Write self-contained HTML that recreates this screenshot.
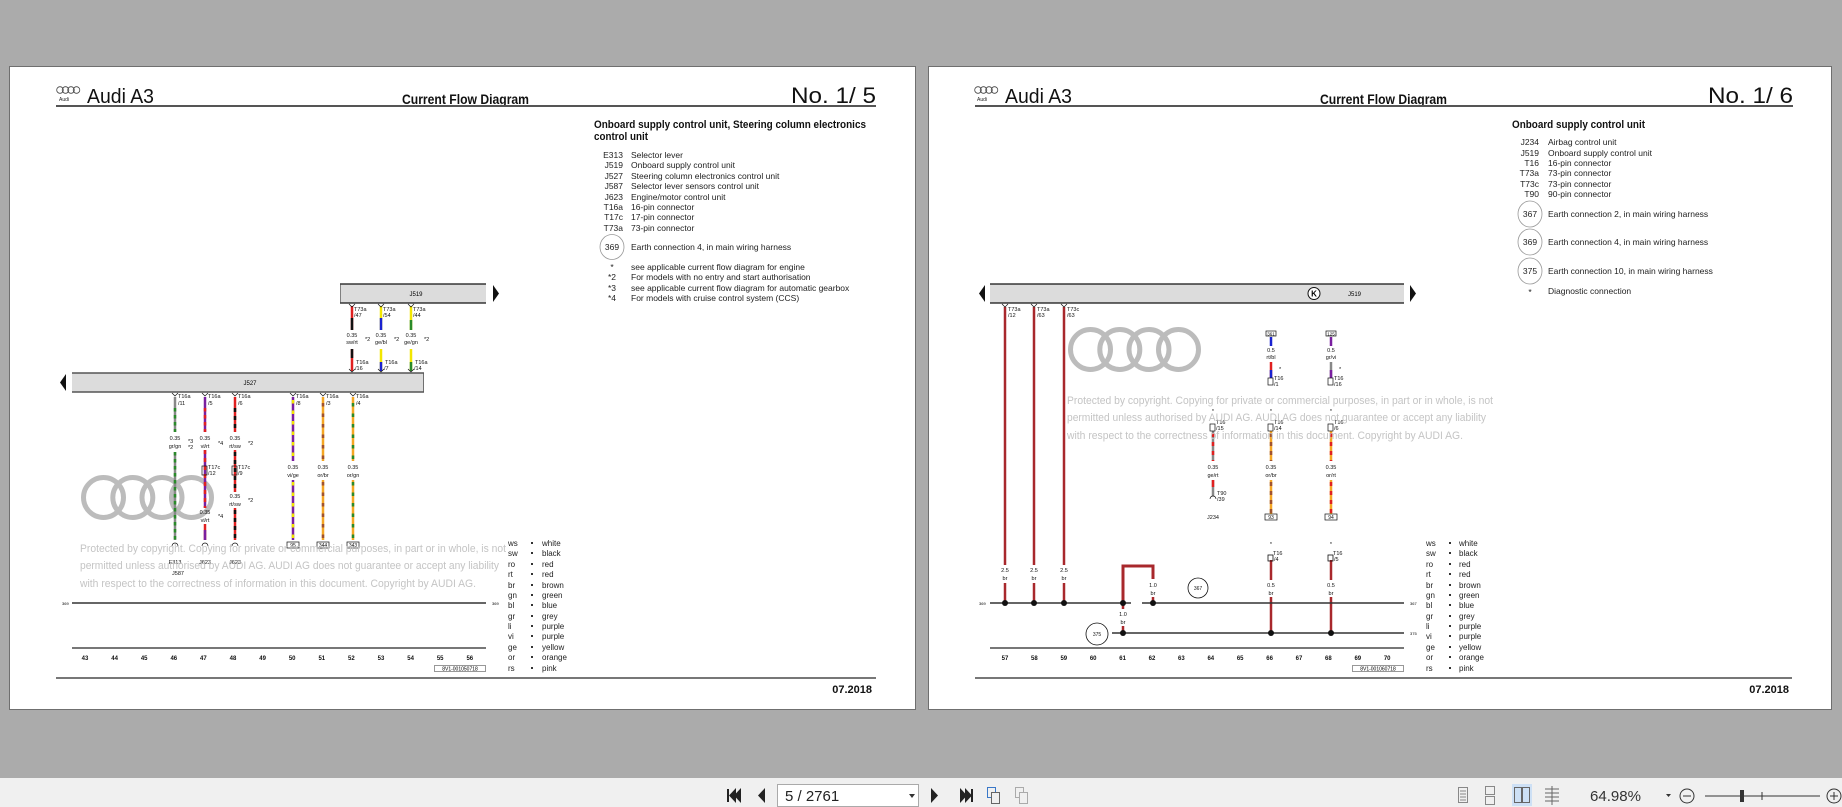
<!DOCTYPE html>
<html><head><meta charset="utf-8"><style>
html,body{margin:0;padding:0;width:1842px;height:807px;overflow:hidden;background:#ababab}
svg{display:block}
.n{font-family:"Liberation Sans Narrow","Liberation Sans",sans-serif}
.s{font-family:"Liberation Sans",sans-serif}
</style></head><body>
<svg width="1842" height="807" viewBox="0 0 1842 807" xmlns="http://www.w3.org/2000/svg">
<rect width="1842" height="807" fill="#ababab"/>
<rect x="9.5" y="66.5" width="906" height="643" fill="#fff" stroke="#6f6f6f"/>
<rect x="928.5" y="66.5" width="903" height="643" fill="#fff" stroke="#6f6f6f"/>

<g id="L">
<g fill="none" stroke="#444" stroke-width="0.8"><circle cx="60" cy="90" r="3.3"/><circle cx="65.5" cy="90" r="3.3"/><circle cx="71" cy="90" r="3.3"/><circle cx="76.5" cy="90" r="3.3"/></g>
<text x="59" y="101" font-size="5" class="s" fill="#222">Audi</text>
<text x="87" y="103" font-size="20" class="n" textLength="67" lengthAdjust="spacingAndGlyphs" fill="#111">Audi A3</text>
<text x="402" y="104" font-size="14" font-weight="bold" class="n" textLength="127" lengthAdjust="spacingAndGlyphs" fill="#111">Current Flow Diagram</text>
<text x="791" y="103" font-size="22" class="n" textLength="85" lengthAdjust="spacingAndGlyphs" fill="#111">No.  1/  5</text>
<line x1="56" y1="106" x2="876" y2="106" stroke="#555" stroke-width="2"/>
<text x="594" y="128" font-size="11" font-weight="bold" class="n" textLength="272" lengthAdjust="spacingAndGlyphs" fill="#111">Onboard supply control unit, Steering column electronics</text>
<text x="594" y="140" font-size="11" font-weight="bold" class="n" textLength="54" lengthAdjust="spacingAndGlyphs" fill="#111">control unit</text>
<g font-size="8.5" class="n" fill="#222">
<g text-anchor="end">
<text x="623" y="158">E313</text><text x="623" y="168">J519</text><text x="623" y="179">J527</text><text x="623" y="189">J587</text><text x="623" y="200">J623</text><text x="623" y="210">T16a</text><text x="623" y="220">T17c</text><text x="623" y="231">T73a</text>
</g>
<text x="631" y="158">Selector lever</text><text x="631" y="168">Onboard supply control unit</text><text x="631" y="179">Steering column electronics control unit</text><text x="631" y="189">Selector lever sensors control unit</text><text x="631" y="200">Engine/motor control unit</text><text x="631" y="210">16-pin connector</text><text x="631" y="220">17-pin connector</text><text x="631" y="231">73-pin connector</text>
<text x="612" y="250" text-anchor="middle">369</text><text x="631" y="250">Earth connection 4, in main wiring harness</text>
<text x="612" y="270" text-anchor="middle">*</text><text x="631" y="270">see applicable current flow diagram for engine</text>
<text x="612" y="280" text-anchor="middle">*2</text><text x="631" y="280">For models with no entry and start authorisation</text>
<text x="612" y="291" text-anchor="middle">*3</text><text x="631" y="291">see applicable current flow diagram for automatic gearbox</text>
<text x="612" y="301" text-anchor="middle">*4</text><text x="631" y="301">For models with cruise control system (CCS)</text>
</g>
<ellipse cx="612" cy="247" rx="12" ry="12.5" fill="none" stroke="#999" stroke-width="0.8"/>

<g fill="none" stroke="#bcbcbc" stroke-width="5"><circle cx="103.5" cy="497.5" r="20"/><circle cx="132.8" cy="497.5" r="20"/><circle cx="162" cy="497.5" r="20"/><circle cx="191.5" cy="497.5" r="20"/></g>

<rect x="340" y="284" width="146" height="19" fill="#dcdcdc"/>
<line x1="340" y1="284" x2="486" y2="284" stroke="#111" stroke-width="1.2"/><line x1="340" y1="303" x2="486" y2="303" stroke="#111" stroke-width="1.2"/><line x1="340.5" y1="284" x2="340.5" y2="303" stroke="#444" stroke-width="0.6"/>
<text x="416" y="296" font-size="6" class="n" text-anchor="middle">J519</text>
<polygon points="493,285 499,293.5 493,302" fill="#111"/>
<rect x="72" y="373" width="352" height="19" fill="#dcdcdc"/>
<line x1="72" y1="373" x2="424" y2="373" stroke="#555" stroke-width="1.5"/><line x1="72" y1="392" x2="424" y2="392" stroke="#555" stroke-width="1.5"/><line x1="423.5" y1="373" x2="423.5" y2="392" stroke="#555" stroke-width="0.8"/>
<text x="250" y="385" font-size="6" class="n" text-anchor="middle">J527</text>
<polygon points="66,374 60,382.5 66,391" fill="#111"/>

<g stroke-width="2.5">
<line x1="352" y1="306" x2="352" y2="330" stroke="#e02020"/><line x1="352" y1="318" x2="352" y2="330" stroke="#111"/>
<line x1="352" y1="349" x2="352" y2="371" stroke="#e02020"/><line x1="352" y1="349" x2="352" y2="358" stroke="#111"/>
<line x1="381" y1="306" x2="381" y2="330" stroke="#f2e600"/><line x1="381" y1="318" x2="381" y2="330" stroke="#1a22d0"/>
<line x1="381" y1="349" x2="381" y2="371" stroke="#f2e600"/><line x1="381" y1="362" x2="381" y2="371" stroke="#1a22d0"/>
<line x1="411" y1="306" x2="411" y2="330" stroke="#f2e600"/><line x1="411" y1="320" x2="411" y2="330" stroke="#2a8a2a"/>
<line x1="411" y1="349" x2="411" y2="371" stroke="#f2e600"/><line x1="411" y1="362" x2="411" y2="371" stroke="#2a8a2a"/>
</g>
<g font-size="5.5" class="n" fill="#111">
<text x="354" y="311">T73a</text><text x="354" y="317">/47</text><text x="383" y="311">T73a</text><text x="383" y="317">/54</text><text x="413" y="311">T73a</text><text x="413" y="317">/44</text>
<text x="352" y="337" text-anchor="middle">0.35</text><text x="352" y="344" text-anchor="middle">sw/rt</text><text x="365" y="341">*2</text>
<text x="381" y="337" text-anchor="middle">0.35</text><text x="381" y="344" text-anchor="middle">ge/bl</text><text x="394" y="341">*2</text>
<text x="411" y="337" text-anchor="middle">0.35</text><text x="411" y="344" text-anchor="middle">ge/gn</text><text x="424" y="341">*2</text>
<text x="356" y="364">T16a</text><text x="355" y="370">/16</text><text x="385" y="364">T16a</text><text x="384" y="370">/7</text><text x="415" y="364">T16a</text><text x="414" y="370">/14</text>
</g>
<g stroke="#111" fill="none" stroke-width="0.7"><path d="M349 304 l3 3 l3 -3"/><path d="M378 304 l3 3 l3 -3"/><path d="M408 304 l3 3 l3 -3"/><path d="M349 369 l3 3 l3 -3"/><path d="M378 369 l3 3 l3 -3"/><path d="M408 369 l3 3 l3 -3"/></g>

<g stroke-width="2.5">
<line x1="175" y1="397" x2="175" y2="432" stroke="#888"/><line x1="175" y1="408" x2="175" y2="432" stroke="#2a8a2a" stroke-dasharray="3.5 3.5"/>
<line x1="175" y1="452" x2="175" y2="540" stroke="#888"/><line x1="175" y1="452" x2="175" y2="540" stroke="#2a8a2a" stroke-dasharray="3.5 3.5"/>
<line x1="205" y1="397" x2="205" y2="432" stroke="#7a1fa0"/><line x1="205" y1="408" x2="205" y2="432" stroke="#e02020" stroke-dasharray="3.5 3.5"/>
<line x1="205" y1="450" x2="205" y2="508" stroke="#7a1fa0"/><line x1="205" y1="450" x2="205" y2="508" stroke="#e02020" stroke-dasharray="4 4"/>
<line x1="205" y1="524" x2="205" y2="540" stroke="#e02020"/><line x1="205" y1="530" x2="205" y2="540" stroke="#7a1fa0"/>
<line x1="235" y1="397" x2="235" y2="432" stroke="#e02020"/><line x1="235" y1="408" x2="235" y2="432" stroke="#111" stroke-dasharray="4 4"/>
<line x1="235" y1="450" x2="235" y2="492" stroke="#e02020"/><line x1="235" y1="452" x2="235" y2="492" stroke="#111" stroke-dasharray="4 4"/>
<line x1="235" y1="508" x2="235" y2="540" stroke="#e02020"/><line x1="235" y1="510" x2="235" y2="540" stroke="#111" stroke-dasharray="4 4"/>
<line x1="293" y1="397" x2="293" y2="461" stroke="#7a1fa0"/><line x1="293" y1="400" x2="293" y2="461" stroke="#f2e600" stroke-dasharray="3.5 7"/>
<line x1="293" y1="480" x2="293" y2="540" stroke="#7a1fa0"/><line x1="293" y1="482" x2="293" y2="540" stroke="#f2e600" stroke-dasharray="3.5 7"/>
<line x1="323" y1="397" x2="323" y2="461" stroke="#f5a623"/><line x1="323" y1="403" x2="323" y2="461" stroke="#a0522d" stroke-dasharray="3.5 7"/>
<line x1="323" y1="480" x2="323" y2="540" stroke="#f5a623"/><line x1="323" y1="482" x2="323" y2="540" stroke="#a0522d" stroke-dasharray="3.5 7"/>
<line x1="353" y1="397" x2="353" y2="461" stroke="#f5a623"/><line x1="353" y1="403" x2="353" y2="461" stroke="#2a8a2a" stroke-dasharray="3.5 7"/>
<line x1="353" y1="480" x2="353" y2="540" stroke="#f5a623"/><line x1="353" y1="482" x2="353" y2="540" stroke="#2a8a2a" stroke-dasharray="3.5 7"/>
</g>
<g stroke="#111" fill="none" stroke-width="0.7">
<path d="M172 393 l3 3 l3 -3"/><path d="M202 393 l3 3 l3 -3"/><path d="M232 393 l3 3 l3 -3"/><path d="M290 393 l3 3 l3 -3"/><path d="M320 393 l3 3 l3 -3"/><path d="M350 393 l3 3 l3 -3"/>
<path d="M172 546 a3 3 0 0 1 6 0"/><path d="M202 546 a3 3 0 0 1 6 0"/><path d="M232 546 a3 3 0 0 1 6 0"/>
<rect x="202" y="466" width="5" height="9"/><rect x="232" y="466" width="5" height="9"/>
<rect x="287" y="542" width="12" height="6"/><rect x="317" y="542" width="12" height="6"/><rect x="347" y="542" width="12" height="6"/>
</g>
<g font-size="5.5" class="n" fill="#111">
<text x="178" y="398">T16a</text><text x="178" y="405">/11</text><text x="208" y="398">T16a</text><text x="208" y="405">/5</text><text x="238" y="398">T16a</text><text x="238" y="405">/6</text>
<text x="296" y="398">T16a</text><text x="296" y="405">/8</text><text x="326" y="398">T16a</text><text x="326" y="405">/3</text><text x="356" y="398">T16a</text><text x="356" y="405">/4</text>
<text x="175" y="440" text-anchor="middle">0.35</text><text x="175" y="448" text-anchor="middle">gr/gn</text><text x="188" y="443">*3</text><text x="188" y="449">*2</text>
<text x="205" y="440" text-anchor="middle">0.35</text><text x="205" y="448" text-anchor="middle">vi/rt</text><text x="218" y="445">*4</text>
<text x="235" y="440" text-anchor="middle">0.35</text><text x="235" y="448" text-anchor="middle">rt/sw</text><text x="248" y="445">*2</text>
<text x="208" y="469">T17c</text><text x="208" y="475">/12</text><text x="238" y="469">T17c</text><text x="238" y="475">/9</text>
<text x="235" y="498" text-anchor="middle">0.35</text><text x="235" y="506" text-anchor="middle">rt/sw</text><text x="248" y="502">*2</text>
<text x="205" y="514" text-anchor="middle">0.35</text><text x="205" y="522" text-anchor="middle">vi/rt</text><text x="218" y="518">*4</text>
<text x="293" y="469" text-anchor="middle">0.35</text><text x="293" y="477" text-anchor="middle">vi/ge</text>
<text x="323" y="469" text-anchor="middle">0.35</text><text x="323" y="477" text-anchor="middle">or/br</text>
<text x="353" y="469" text-anchor="middle">0.35</text><text x="353" y="477" text-anchor="middle">or/gn</text>
<text x="293" y="547" text-anchor="middle" font-size="5">95</text><text x="323" y="547" text-anchor="middle" font-size="5">344</text><text x="353" y="547" text-anchor="middle" font-size="5">343</text>
<text x="175" y="564" text-anchor="middle">E313</text><text x="205" y="564" text-anchor="middle">J623</text><text x="235" y="564" text-anchor="middle">J623</text><text x="178" y="575" text-anchor="middle">J587</text>
</g>
<g font-size="11" class="n" fill="#c4c4c4">
<text x="80" y="552" textLength="426" lengthAdjust="spacingAndGlyphs">Protected by copyright. Copying for private or commercial purposes, in part or in whole, is not</text>
<text x="80" y="569" textLength="419" lengthAdjust="spacingAndGlyphs">permitted unless authorised by AUDI AG. AUDI AG does not guarantee or accept any liability</text>
<text x="80" y="587" textLength="396" lengthAdjust="spacingAndGlyphs">with respect to the correctness of information in this document. Copyright by AUDI AG.</text>
</g>
<line x1="72" y1="603" x2="486" y2="603" stroke="#333" stroke-width="1.5"/>
<text x="62" y="605" font-size="4" class="n">369</text><text x="492" y="605" font-size="4" class="n">369</text>
<line x1="72" y1="648" x2="486" y2="648" stroke="#777" stroke-width="2"/>
<g font-size="6" font-weight="bold" class="n" text-anchor="middle" fill="#111">
<text x="85" y="660">43</text><text x="114.6" y="660">44</text><text x="144.2" y="660">45</text><text x="173.8" y="660">46</text><text x="203.4" y="660">47</text><text x="233" y="660">48</text><text x="262.6" y="660">49</text><text x="292.2" y="660">50</text><text x="321.8" y="660">51</text><text x="351.4" y="660">52</text><text x="381" y="660">53</text><text x="410.6" y="660">54</text><text x="440.2" y="660">55</text><text x="469.8" y="660">56</text>
</g>
<rect x="434.5" y="665.5" width="51" height="6" fill="none" stroke="#333" stroke-width="0.5"/>
<text x="460" y="670.5" font-size="5" class="n" text-anchor="middle">8V1-001050718</text>
<g font-size="8" class="n" fill="#222">
<text x="508" y="546">ws</text><text x="508" y="556">sw</text><text x="508" y="567">ro</text><text x="508" y="577">rt</text><text x="508" y="588">br</text><text x="508" y="598">gn</text><text x="508" y="608">bl</text><text x="508" y="619">gr</text><text x="508" y="629">li</text><text x="508" y="639">vi</text><text x="508" y="650">ge</text><text x="508" y="660">or</text><text x="508" y="671">rs</text>
<text x="542" y="546">white</text><text x="542" y="556">black</text><text x="542" y="567">red</text><text x="542" y="577">red</text><text x="542" y="588">brown</text><text x="542" y="598">green</text><text x="542" y="608">blue</text><text x="542" y="619">grey</text><text x="542" y="629">purple</text><text x="542" y="639">purple</text><text x="542" y="650">yellow</text><text x="542" y="660">orange</text><text x="542" y="671">pink</text>
</g>
<g fill="#333"><rect x="531" y="542" width="2" height="2"/><rect x="531" y="552" width="2" height="2"/><rect x="531" y="563" width="2" height="2"/><rect x="531" y="573" width="2" height="2"/><rect x="531" y="584" width="2" height="2"/><rect x="531" y="594" width="2" height="2"/><rect x="531" y="604" width="2" height="2"/><rect x="531" y="615" width="2" height="2"/><rect x="531" y="625" width="2" height="2"/><rect x="531" y="635" width="2" height="2"/><rect x="531" y="646" width="2" height="2"/><rect x="531" y="656" width="2" height="2"/><rect x="531" y="667" width="2" height="2"/></g>
<line x1="56" y1="678" x2="876" y2="678" stroke="#777" stroke-width="2"/>
<text x="872" y="693" font-size="11" font-weight="bold" class="n" text-anchor="end" fill="#111">07.2018</text>
</g>

<g>
<g fill="none" stroke="#444" stroke-width="0.8"><circle cx="978" cy="90" r="3.3"/><circle cx="983.5" cy="90" r="3.3"/><circle cx="989" cy="90" r="3.3"/><circle cx="994.5" cy="90" r="3.3"/></g>
<text x="977" y="101" font-size="5" class="s" fill="#222">Audi</text>
<text x="1005" y="103" font-size="20" class="n" textLength="67" lengthAdjust="spacingAndGlyphs" fill="#111">Audi A3</text>
<text x="1320" y="104" font-size="14" font-weight="bold" class="n" textLength="127" lengthAdjust="spacingAndGlyphs" fill="#111">Current Flow Diagram</text>
<text x="1708" y="103" font-size="22" class="n" textLength="85" lengthAdjust="spacingAndGlyphs" fill="#111">No.  1/  6</text>
<line x1="975" y1="106" x2="1793" y2="106" stroke="#555" stroke-width="2"/>
<text x="1512" y="128" font-size="11" font-weight="bold" class="n" textLength="133" lengthAdjust="spacingAndGlyphs" fill="#111">Onboard supply control unit</text>
<g font-size="8.5" class="n" fill="#222">
<g text-anchor="end"><text x="1539" y="145">J234</text><text x="1539" y="156">J519</text><text x="1539" y="166">T16</text><text x="1539" y="176">T73a</text><text x="1539" y="187">T73c</text><text x="1539" y="197">T90</text></g>
<text x="1548" y="145">Airbag control unit</text><text x="1548" y="156">Onboard supply control unit</text><text x="1548" y="166">16-pin connector</text><text x="1548" y="176">73-pin connector</text><text x="1548" y="187">73-pin connector</text><text x="1548" y="197">90-pin connector</text>
<text x="1530" y="217" text-anchor="middle">367</text><text x="1548" y="217">Earth connection 2, in main wiring harness</text>
<text x="1530" y="245" text-anchor="middle">369</text><text x="1548" y="245">Earth connection 4, in main wiring harness</text>
<text x="1530" y="274" text-anchor="middle">375</text><text x="1548" y="274">Earth connection 10, in main wiring harness</text>
<text x="1530" y="295" text-anchor="middle">*</text><text x="1548" y="294">Diagnostic connection</text>
</g>
<g fill="none" stroke="#999" stroke-width="0.8"><ellipse cx="1530" cy="214" rx="12" ry="13"/><ellipse cx="1530" cy="242" rx="12" ry="13"/><ellipse cx="1530" cy="271" rx="12" ry="13"/></g>

<g fill="none" stroke="#bcbcbc" stroke-width="5"><circle cx="1090.5" cy="349.5" r="20"/><circle cx="1119.8" cy="349.5" r="20"/><circle cx="1149" cy="349.5" r="20"/><circle cx="1178.5" cy="349.5" r="20"/></g>

<rect x="990" y="284" width="414" height="19" fill="#dcdcdc"/>
<line x1="990" y1="284" x2="1404" y2="284" stroke="#111" stroke-width="1.2"/><line x1="990" y1="303" x2="1404" y2="303" stroke="#111" stroke-width="1.2"/>
<polygon points="985,285 979,293.5 985,302" fill="#111"/>
<polygon points="1410,285 1416,293.5 1410,302" fill="#111"/>
<circle cx="1314" cy="293.5" r="6" fill="#fff" stroke="#111" stroke-width="1"/>
<text x="1314" y="296.5" font-size="8" font-weight="bold" class="s" text-anchor="middle">K</text>
<text x="1348" y="296" font-size="6" class="n">J519</text>

<g stroke="#a8282c" stroke-width="2.5">
<line x1="1005" y1="307" x2="1005" y2="565"/><line x1="1005" y1="583" x2="1005" y2="603"/>
<line x1="1034" y1="307" x2="1034" y2="565"/><line x1="1034" y1="583" x2="1034" y2="603"/>
<line x1="1064" y1="307" x2="1064" y2="565"/><line x1="1064" y1="583" x2="1064" y2="603"/>
<line x1="1271" y1="560" x2="1271" y2="580"/><line x1="1271" y1="597" x2="1271" y2="633"/>
<line x1="1331" y1="560" x2="1331" y2="580"/><line x1="1331" y1="597" x2="1331" y2="633"/>
<line x1="1123" y1="603" x2="1123" y2="609"/><line x1="1123" y1="626" x2="1123" y2="633"/>
<line x1="1153" y1="597" x2="1153" y2="603"/>
</g>
<path d="M1123 603 V566 H1153 V579" fill="none" stroke="#a8282c" stroke-width="3"/>
<g stroke="#111" fill="none" stroke-width="0.7"><path d="M1002 304 l3 3 l3 -3"/><path d="M1031 304 l3 3 l3 -3"/><path d="M1061 304 l3 3 l3 -3"/></g>
<g font-size="5.5" class="n" fill="#111">
<text x="1008" y="311">T73a</text><text x="1008" y="317">/12</text><text x="1037" y="311">T73a</text><text x="1037" y="317">/63</text><text x="1067" y="311">T73c</text><text x="1067" y="317">/63</text>
<text x="1005" y="572" text-anchor="middle">2.5</text><text x="1005" y="580" text-anchor="middle">br</text>
<text x="1034" y="572" text-anchor="middle">2.5</text><text x="1034" y="580" text-anchor="middle">br</text>
<text x="1064" y="572" text-anchor="middle">2.5</text><text x="1064" y="580" text-anchor="middle">br</text>
<text x="1153" y="587" text-anchor="middle">1.0</text><text x="1153" y="595" text-anchor="middle">br</text>
<text x="1123" y="616" text-anchor="middle">1.0</text><text x="1123" y="624" text-anchor="middle">br</text>
<text x="1271" y="587" text-anchor="middle">0.5</text><text x="1271" y="595" text-anchor="middle">br</text>
<text x="1331" y="587" text-anchor="middle">0.5</text><text x="1331" y="595" text-anchor="middle">br</text>
<text x="1273" y="555">T16</text><text x="1274" y="561">/4</text><text x="1333" y="555">T16</text><text x="1334" y="561">/5</text>
<text x="1271" y="546" text-anchor="middle">*</text><text x="1331" y="546" text-anchor="middle">*</text>
<text x="1198" y="590" text-anchor="middle" font-size="5">367</text>
<text x="1097" y="636" text-anchor="middle" font-size="5">375</text>
</g>
<g fill="none" stroke="#111" stroke-width="0.8">
<circle cx="1198" cy="588" r="10"/><circle cx="1097" cy="634" r="11"/>
<rect x="1268" y="555" width="5" height="6"/><rect x="1328" y="555" width="5" height="6"/>
</g>
<g stroke-width="2.5">
<line x1="1271" y1="337" x2="1271" y2="346" stroke="#1a22d0"/>
<line x1="1271" y1="362" x2="1271" y2="378" stroke="#e02020"/><line x1="1271" y1="370" x2="1271" y2="378" stroke="#1a22d0"/>
<line x1="1331" y1="337" x2="1331" y2="346" stroke="#7a1fa0"/>
<line x1="1331" y1="362" x2="1331" y2="378" stroke="#888"/><line x1="1331" y1="370" x2="1331" y2="378" stroke="#7a1fa0"/>
<line x1="1213" y1="431" x2="1213" y2="461" stroke="#888"/><line x1="1213" y1="433" x2="1213" y2="461" stroke="#e02020" stroke-dasharray="4 5"/>
<line x1="1213" y1="480" x2="1213" y2="496" stroke="#888"/><line x1="1213" y1="480" x2="1213" y2="487" stroke="#e02020"/>
<line x1="1271" y1="431" x2="1271" y2="461" stroke="#f5a623"/><line x1="1271" y1="433" x2="1271" y2="461" stroke="#a0522d" stroke-dasharray="4 5"/>
<line x1="1271" y1="480" x2="1271" y2="514" stroke="#f5a623"/><line x1="1271" y1="482" x2="1271" y2="514" stroke="#a0522d" stroke-dasharray="4 5"/>
<line x1="1331" y1="431" x2="1331" y2="461" stroke="#f5a623"/><line x1="1331" y1="433" x2="1331" y2="461" stroke="#e02020" stroke-dasharray="4 5"/>
<line x1="1331" y1="480" x2="1331" y2="514" stroke="#f5a623"/><line x1="1331" y1="482" x2="1331" y2="514" stroke="#e02020" stroke-dasharray="4 5"/>
</g>
<g fill="none" stroke="#111" stroke-width="0.7">
<rect x="1266" y="331" width="10" height="5"/><rect x="1326" y="331" width="10" height="5"/>
<rect x="1268" y="378" width="5" height="7"/><rect x="1328" y="378" width="5" height="7"/>
<rect x="1210" y="424" width="5" height="7"/><rect x="1268" y="424" width="5" height="7"/><rect x="1328" y="424" width="5" height="7"/>
<path d="M1210 499 a3 3 0 0 1 6 0"/>
<rect x="1265" y="514" width="12" height="6"/><rect x="1325" y="514" width="12" height="6"/>
</g>
<g font-size="5.5" class="n" fill="#111">
<text x="1271" y="335.5" text-anchor="middle" font-size="4.5">361</text><text x="1331" y="335.5" text-anchor="middle" font-size="4.5">125</text>
<text x="1271" y="352" text-anchor="middle">0.5</text><text x="1271" y="359" text-anchor="middle">rt/bl</text>
<text x="1331" y="352" text-anchor="middle">0.5</text><text x="1331" y="359" text-anchor="middle">gr/vi</text>
<text x="1279" y="371">*</text><text x="1339" y="371">*</text>
<text x="1274" y="380">T16</text><text x="1274" y="386">/1</text><text x="1334" y="380">T16</text><text x="1334" y="386">/16</text>
<text x="1216" y="424">T16</text><text x="1216" y="430">/15</text><text x="1274" y="424">T16</text><text x="1274" y="430">/14</text><text x="1334" y="424">T16</text><text x="1334" y="430">/6</text>
<text x="1213" y="413" text-anchor="middle">*</text><text x="1271" y="413" text-anchor="middle">*</text><text x="1331" y="413" text-anchor="middle">*</text>
<text x="1213" y="469" text-anchor="middle">0.35</text><text x="1213" y="477" text-anchor="middle">ge/rt</text>
<text x="1271" y="469" text-anchor="middle">0.35</text><text x="1271" y="477" text-anchor="middle">or/br</text>
<text x="1331" y="469" text-anchor="middle">0.35</text><text x="1331" y="477" text-anchor="middle">or/rt</text>
<text x="1217" y="495">T90</text><text x="1217" y="501">/39</text>
<text x="1213" y="519" text-anchor="middle">J234</text>
<text x="1271" y="519" text-anchor="middle" font-size="5">93</text><text x="1331" y="519" text-anchor="middle" font-size="5">94</text>
</g>
<g font-size="11" class="n" fill="#c4c4c4">
<text x="1067" y="404" textLength="426" lengthAdjust="spacingAndGlyphs">Protected by copyright. Copying for private or commercial purposes, in part or in whole, is not</text>
<text x="1067" y="421" textLength="419" lengthAdjust="spacingAndGlyphs">permitted unless authorised by AUDI AG. AUDI AG does not guarantee or accept any liability</text>
<text x="1067" y="439" textLength="396" lengthAdjust="spacingAndGlyphs">with respect to the correctness of information in this document. Copyright by AUDI AG.</text>
</g>
<g stroke="#333" stroke-width="1.5"><line x1="990" y1="603" x2="1131" y2="603"/><line x1="1142" y1="603" x2="1404" y2="603"/><line x1="1112" y1="633" x2="1404" y2="633"/></g>
<g fill="#111"><circle cx="1005" cy="603" r="3"/><circle cx="1034" cy="603" r="3"/><circle cx="1064" cy="603" r="3"/><circle cx="1123" cy="603" r="3"/><circle cx="1153" cy="603" r="3"/><circle cx="1123" cy="633" r="3"/><circle cx="1271" cy="633" r="3"/><circle cx="1331" cy="633" r="3"/></g>
<text x="979" y="605" font-size="4" class="n">369</text><text x="1410" y="605" font-size="4" class="n">367</text><text x="1410" y="635" font-size="4" class="n">375</text>
<line x1="990" y1="648" x2="1404" y2="648" stroke="#777" stroke-width="2"/>
<g font-size="6" font-weight="bold" class="n" text-anchor="middle" fill="#111">
<text x="1005" y="660">57</text><text x="1034.4" y="660">58</text><text x="1063.8" y="660">59</text><text x="1093.2" y="660">60</text><text x="1122.6" y="660">61</text><text x="1152" y="660">62</text><text x="1181.4" y="660">63</text><text x="1210.8" y="660">64</text><text x="1240.2" y="660">65</text><text x="1269.6" y="660">66</text><text x="1299" y="660">67</text><text x="1328.4" y="660">68</text><text x="1357.8" y="660">69</text><text x="1387.2" y="660">70</text>
</g>
<rect x="1352.5" y="665.5" width="51" height="6" fill="none" stroke="#333" stroke-width="0.5"/>
<text x="1378" y="670.5" font-size="5" class="n" text-anchor="middle">8V1-001060718</text>
<g font-size="8" class="n" fill="#222">
<text x="1426" y="546">ws</text><text x="1426" y="556">sw</text><text x="1426" y="567">ro</text><text x="1426" y="577">rt</text><text x="1426" y="588">br</text><text x="1426" y="598">gn</text><text x="1426" y="608">bl</text><text x="1426" y="619">gr</text><text x="1426" y="629">li</text><text x="1426" y="639">vi</text><text x="1426" y="650">ge</text><text x="1426" y="660">or</text><text x="1426" y="671">rs</text>
<text x="1459" y="546">white</text><text x="1459" y="556">black</text><text x="1459" y="567">red</text><text x="1459" y="577">red</text><text x="1459" y="588">brown</text><text x="1459" y="598">green</text><text x="1459" y="608">blue</text><text x="1459" y="619">grey</text><text x="1459" y="629">purple</text><text x="1459" y="639">purple</text><text x="1459" y="650">yellow</text><text x="1459" y="660">orange</text><text x="1459" y="671">pink</text>
</g>
<g fill="#333"><rect x="1449" y="542" width="2" height="2"/><rect x="1449" y="552" width="2" height="2"/><rect x="1449" y="563" width="2" height="2"/><rect x="1449" y="573" width="2" height="2"/><rect x="1449" y="584" width="2" height="2"/><rect x="1449" y="594" width="2" height="2"/><rect x="1449" y="604" width="2" height="2"/><rect x="1449" y="615" width="2" height="2"/><rect x="1449" y="625" width="2" height="2"/><rect x="1449" y="635" width="2" height="2"/><rect x="1449" y="646" width="2" height="2"/><rect x="1449" y="656" width="2" height="2"/><rect x="1449" y="667" width="2" height="2"/></g>
<line x1="975" y1="678" x2="1792" y2="678" stroke="#777" stroke-width="2"/>
<text x="1789" y="693" font-size="11" font-weight="bold" class="n" text-anchor="end" fill="#111">07.2018</text>
</g>

<rect x="0" y="778" width="1842" height="29" fill="#f0f0f0"/>
<g fill="#222">
<rect x="727" y="789" width="2" height="13"/><polygon points="736,788 729,795.5 736,803"/><polygon points="741,788 734,795.5 741,803"/>
<polygon points="765,788 758,795.5 765,803"/>
<polygon points="931,788 938,795.5 931,803"/>
<polygon points="960,788 967,795.5 960,803"/><polygon points="965,788 972,795.5 965,803"/><rect x="971" y="789" width="2" height="13"/>
</g>
<rect x="777.5" y="784.5" width="141" height="22" fill="#fff" stroke="#aaa"/>
<text x="785" y="801" font-size="15" class="n" fill="#222">5 / 2761</text>
<polygon points="909,794 915,794 912,798" fill="#333"/>
<g fill="none" stroke-width="1">
<rect x="987.5" y="787.5" width="8" height="10" stroke="#3a78c8"/><rect x="991.5" y="792.5" width="8" height="11" stroke="#666" fill="#f0f0f0"/>
<rect x="1015.5" y="787.5" width="8" height="10" stroke="#aaa"/><rect x="1019.5" y="792.5" width="8" height="11" stroke="#aaa" fill="#f0f0f0"/>
</g>
<g fill="none" stroke="#888" stroke-width="1">
<rect x="1458.5" y="787.5" width="9" height="15"/><path d="M1460 791h6M1460 794h6M1460 797h6M1460 800h6"/>
<rect x="1485.5" y="786.5" width="9" height="8"/><rect x="1485.5" y="796.5" width="9" height="8"/>
</g>
<rect x="1512" y="784" width="20" height="22" fill="#cde0f5"/>
<g fill="none" stroke="#666" stroke-width="1">
<rect x="1514.5" y="787.5" width="7" height="15"/><rect x="1522.5" y="787.5" width="7" height="15"/>
<path d="M1552 786v19M1545 789h14M1545 793h14M1545 797h14M1545 801h14"/>
</g>
<text x="1590" y="801" font-size="15" class="n" fill="#333" textLength="51" lengthAdjust="spacingAndGlyphs">64.98%</text>
<polygon points="1666,794 1671,794 1668.5,797" fill="#333"/>
<circle cx="1687" cy="796" r="7" fill="none" stroke="#333"/><line x1="1683" y1="796" x2="1691" y2="796" stroke="#333"/>
<line x1="1705" y1="796" x2="1820" y2="796" stroke="#333"/>
<rect x="1740" y="790" width="4" height="12" fill="#333"/>
<line x1="1762" y1="792" x2="1762" y2="800" stroke="#333"/>
<circle cx="1834" cy="796" r="7" fill="none" stroke="#333"/><line x1="1830" y1="796" x2="1838" y2="796" stroke="#333"/><line x1="1834" y1="792" x2="1834" y2="800" stroke="#333"/>
</svg>
</body></html>
